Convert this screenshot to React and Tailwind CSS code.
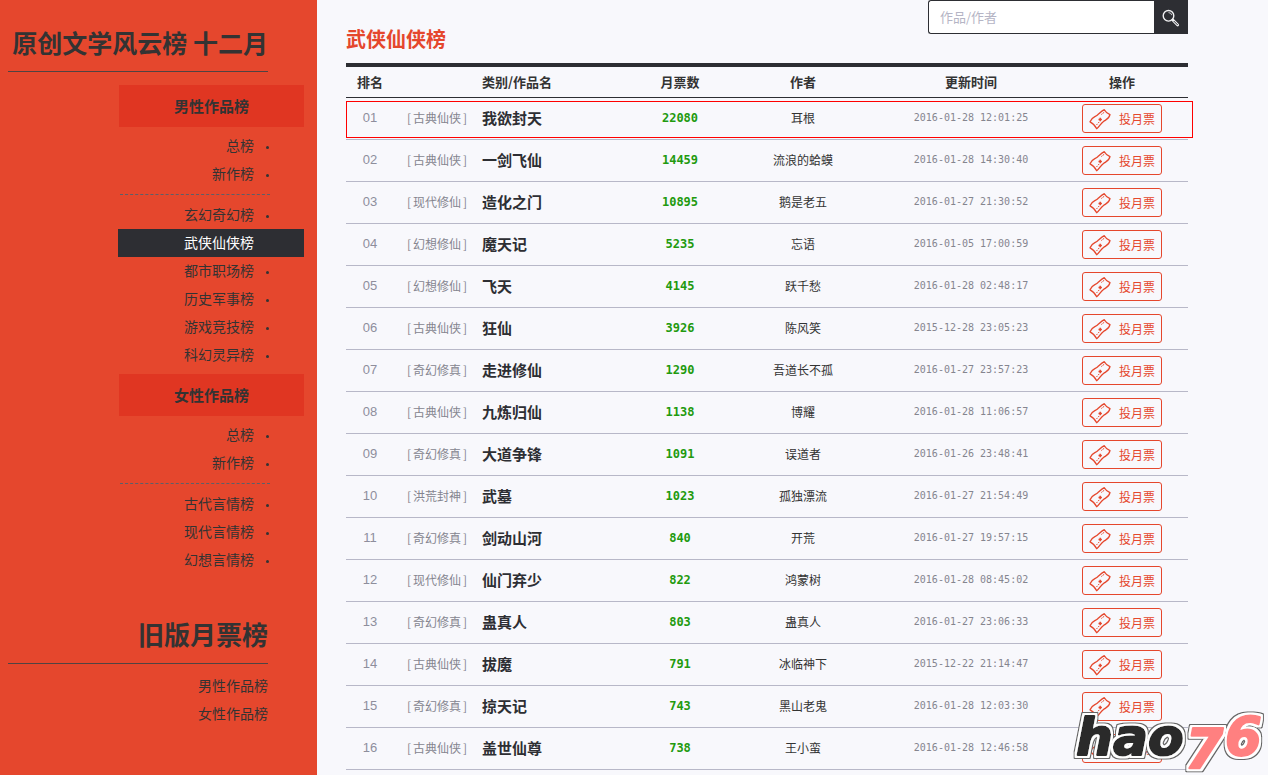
import React, { useState } from 'react';

const MALE_LISTS = [
  ['总榜', '新作榜'],
  ['玄幻奇幻榜', '武侠仙侠榜', '都市职场榜', '历史军事榜', '游戏竞技榜', '科幻灵异榜'],
];

const FEMALE_LISTS = [
  ['总榜', '新作榜'],
  ['古代言情榜', '现代言情榜', '幻想言情榜'],
];

const BOOKS = [
  { type: '古典仙侠', name: '我欲封天', votes: 22080, author: '耳根', time: '2016-01-28 12:01:25' },
  { type: '古典仙侠', name: '一剑飞仙', votes: 14459, author: '流浪的蛤蟆', time: '2016-01-28 14:30:40' },
  { type: '现代修仙', name: '造化之门', votes: 10895, author: '鹅是老五', time: '2016-01-27 21:30:52' },
  { type: '幻想修仙', name: '魔天记', votes: 5235, author: '忘语', time: '2016-01-05 17:00:59' },
  { type: '幻想修仙', name: '飞天', votes: 4145, author: '跃千愁', time: '2016-01-28 02:48:17' },
  { type: '古典仙侠', name: '狂仙', votes: 3926, author: '陈风笑', time: '2015-12-28 23:05:23' },
  { type: '奇幻修真', name: '走进修仙', votes: 1290, author: '吾道长不孤', time: '2016-01-27 23:57:23' },
  { type: '古典仙侠', name: '九炼归仙', votes: 1138, author: '博耀', time: '2016-01-28 11:06:57' },
  { type: '奇幻修真', name: '大道争锋', votes: 1091, author: '误道者', time: '2016-01-26 23:48:41' },
  { type: '洪荒封神', name: '武墓', votes: 1023, author: '孤独漂流', time: '2016-01-27 21:54:49' },
  { type: '奇幻修真', name: '剑动山河', votes: 840, author: '开荒', time: '2016-01-27 19:57:15' },
  { type: '现代修仙', name: '仙门弃少', votes: 822, author: '鸿蒙树', time: '2016-01-28 08:45:02' },
  { type: '奇幻修真', name: '蛊真人', votes: 803, author: '蛊真人', time: '2016-01-27 23:06:33' },
  { type: '古典仙侠', name: '拔魔', votes: 791, author: '冰临神下', time: '2015-12-22 21:14:47' },
  { type: '奇幻修真', name: '掠天记', votes: 743, author: '黑山老鬼', time: '2016-01-28 12:03:30' },
  { type: '古典仙侠', name: '盖世仙尊', votes: 738, author: '王小蛮', time: '2016-01-28 12:46:58' },
];

const TicketIcon = () => (
  <svg width="22" height="22" viewBox="0 0 22 22" fill="none" stroke="#e5472d" strokeWidth="1.3" strokeLinejoin="round" aria-hidden="true">
    <path d="M1 13.800C2.500 9 6 9.200 8.500 7C11 4.800 12.500 3 15.300 1.700C16.500 3.800 18.500 5.600 21 6.700C20 11 17.500 11.500 14.500 13.500C11.500 15.600 10.500 18.800 7.700 20.700C6 17.500 4.500 15.500 1 13.800z" />
    <path d="M12.300 6.500l1.200-.9M14 5.200l1.200-.9M7.500 17l1-1.200M9.200 15l1-1" strokeWidth="1" />
    <path d="M9.500 11.500h3.400M11.200 9.800v3.400" strokeWidth="1.500" />
  </svg>
);

const SearchIcon = () => (
  <svg width="18" height="18" viewBox="0 0 18 18" fill="none" stroke="#f0f0f2" aria-hidden="true">
    <circle cx="6.500" cy="6.800" r="5.300" strokeWidth="1.400" />
    <path d="M6.500 3.600a3.300 3.300 0 0 1 3.300 2.600" strokeWidth="0.800" />
    <path d="M10.800 11l4.900 4.900" strokeWidth="2.800" strokeLinecap="round" />
    <path d="M12 12.300l3.500 3.500" stroke="#2d2e33" strokeWidth="1" strokeLinecap="round" />
  </svg>
);

// Sidebar heading with the rule under it
const SideTitle = ({ children, className = '' }) => (
  <h2 className={`ml-2 mr-[49px] h-14 border-b border-[#504342] text-right font-bold leading-[52px] whitespace-nowrap text-[#333] ${className}`}>
    {children}
  </h2>
);

const SideGroup = ({ title, lists, active, onSelect }) => (
  <section className="ml-[118px] mr-[13px] pb-[5px]">
    <h3 className="ml-px mb-[5px] bg-[#e03622] text-center text-[15px] font-bold leading-[42px] text-[#333]">{title}</h3>
    {lists.map((items, i) => (
      <React.Fragment key={i}>
        {i > 0 && <hr className="ml-0.5 mr-[34px] my-1.5 border-dashed border-[#5c5f68]" />}
        <ul>
          {items.map((item) => {
            const key = `${title}/${item}`;
            const isActive = key === active;
            return (
              <li key={key}>
                <a
                  href="#"
                  onClick={(e) => { e.preventDefault(); onSelect(key); }}
                  className={`flex h-7 items-center justify-end pr-[35px] pb-0.5 text-sm ${isActive ? 'bg-[#2d2e33] text-white' : 'text-[#333]'}`}
                >
                  {item}
                  <span className={`mt-1 ml-3 size-[3px] rounded-full ${isActive ? 'bg-transparent' : 'bg-[#333]'}`} />
                </a>
              </li>
            );
          })}
        </ul>
      </React.Fragment>
    ))}
  </section>
);

const Sidebar = () => {
  const [active, setActive] = useState('男性作品榜/武侠仙侠榜');

  return (
    <aside className="w-[317px] shrink-0 bg-[#e5472d] pt-4">
      <SideTitle className="mb-[13px] text-[25px]">原创文学风云榜 十二月</SideTitle>
      <SideGroup title="男性作品榜" lists={MALE_LISTS} active={active} onSelect={setActive} />
      <SideGroup title="女性作品榜" lists={FEMALE_LISTS} active={active} onSelect={setActive} />
      <SideTitle className="mt-[29px] mb-[7px] text-[26px]">旧版月票榜</SideTitle>
      <ul className="mr-[49px] text-right text-sm leading-7 text-[#333]">
        <li><a href="#">男性作品榜</a></li>
        <li><a href="#">女性作品榜</a></li>
      </ul>
    </aside>
  );
};

const SearchBox = () => (
  <form className="flex h-[34px] w-[260px]" onSubmit={(e) => e.preventDefault()}>
    <input
      type="text"
      aria-label="作品/作者"
      placeholder="作品/作者"
      className="min-w-0 flex-1 rounded-l-[3px] border border-r-0 border-[#2d2e33] bg-white px-[11px] text-[13px] outline-none placeholder:text-[#b5b5c5]"
    />
    <button type="submit" aria-label="搜索" className="flex w-[34px] items-center justify-center bg-[#2d2e33] pt-0.5">
      <SearchIcon />
    </button>
  </form>
);

const RankTable = () => (
  <div className="relative">
    <table className="w-full table-fixed border-t-4 border-[#2d2e33] text-center text-xs text-[#333]">
      <colgroup>
        <col className="w-12" />
        <col className="w-[88px]" />
        <col />
        <col className="w-[108px]" />
        <col className="w-[138px]" />
        <col className="w-[198px]" />
        <col className="w-[118px]" />
      </colgroup>
      <thead>
        <tr className="h-8 border-b border-[#2d2e33] text-[13px]">
          <th>排名</th>
          <th></th>
          <th className="text-left">类别/作品名</th>
          <th>月票数</th>
          <th>作者</th>
          <th>更新时间</th>
          <th className="pr-3.5">操作</th>
        </tr>
      </thead>
      <tbody>
        {BOOKS.map((book, i) => (
          <tr key={book.name} className="h-[42px] border-b border-[#b8b8c8]">
            <td className="font-['Liberation_Sans'] text-[13px] text-[#8e8e9c]">{String(i + 1).padStart(2, '0')}</td>
            <td className="pl-[13px] text-left whitespace-nowrap text-[#85858f]">
              [<span className="mx-0.5">{book.type}</span>]
            </td>
            <td className="text-left text-[15px] font-bold text-[#2d2e33]">{book.name}</td>
            <td className="font-['DejaVu_Sans_Mono'] font-bold text-[#229a0e]">{book.votes}</td>
            <td>{book.author}</td>
            <td className="font-['DejaVu_Sans_Mono'] text-[10px] text-[#85858f]">{book.time}</td>
            <td className="pr-3.5">
              <button className="mx-auto flex h-[29px] w-20 items-center gap-2 rounded-[3px] border border-[#e5472d] pt-px pl-1.5 text-xs whitespace-nowrap text-[#e5472d]">
                <TicketIcon />
                投月票
              </button>
            </td>
          </tr>
        ))}
      </tbody>
    </table>
    {/* frame round the first place */}
    <div className="pointer-events-none absolute top-[38px] left-0 -right-[5px] h-[37px] border border-[#f00]" />
  </div>
);

const Watermark = () => (
  <svg className="pointer-events-none absolute right-0 bottom-0 overflow-visible" width="198" height="64" viewBox="0 0 198 64" role="img" aria-label="hao76">
    {/* white halo with a thin grey rim */}
    <filter id="halo" x="-5%" y="-10%" width="110%" height="120%">
      <feMorphology in="SourceAlpha" operator="dilate" radius="3" result="rim" />
      <feFlood floodColor="#666" />
      <feComposite in2="rim" operator="in" result="grey" />
      <feMorphology in="SourceAlpha" operator="dilate" radius="2" result="inner" />
      <feFlood floodColor="#fff" />
      <feComposite in2="inner" operator="in" result="white" />
      <feMerge>
        <feMergeNode in="grey" />
        <feMergeNode in="white" />
        <feMergeNode in="SourceGraphic" />
      </feMerge>
    </filter>
    <g filter="url(#halo)" fontFamily="DejaVu Sans" fontWeight="bold" fontStyle="italic" strokeWidth="2" strokeLinejoin="round">
      <text x="6" y="44" fontSize="52" fill="#2b2b2b" stroke="#2b2b2b">hao</text>
      <text x="115" y="57" fontSize="55" fill="#ff8080" stroke="#ff8080">7</text>
      <text x="155" y="44" fontSize="53" fill="#ff8080" stroke="#ff8080">6</text>
    </g>
  </svg>
);

const App = () => (
  <div className="relative flex min-h-screen bg-[#f8f8fc] font-['Noto_Sans_CJK_SC',sans-serif]">
    <Sidebar />
    <main className="min-w-0 flex-1 pr-20 pl-[29px]">
      <header className="flex h-[63px] items-start justify-between">
        <h1 className="mt-6 text-xl leading-[30px] font-bold text-[#e5472d]">武侠仙侠榜</h1>
        <SearchBox />
      </header>
      <RankTable />
    </main>
    <Watermark />
  </div>
);

export default App;
